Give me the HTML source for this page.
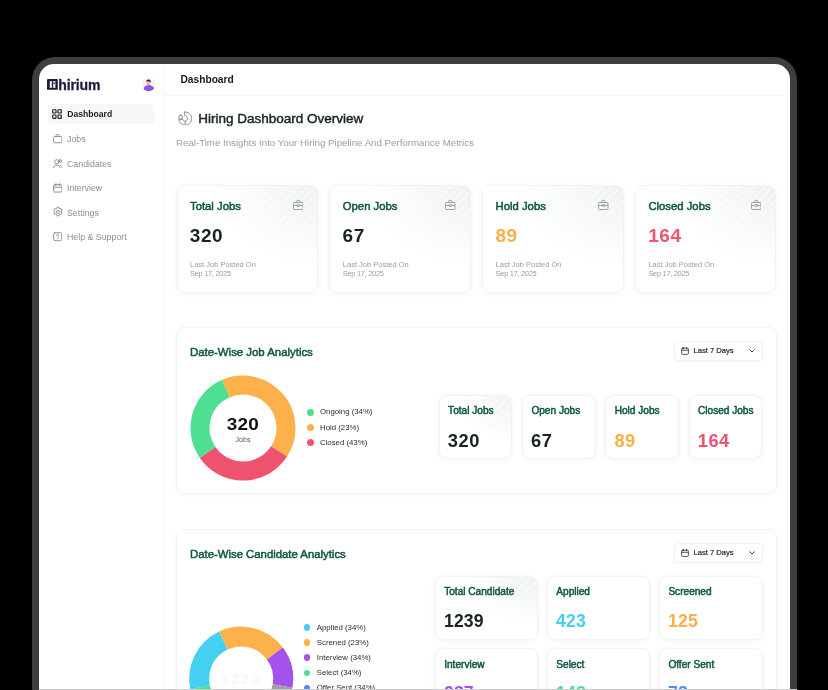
<!DOCTYPE html>
<html lang="en">
<head>
<meta charset="utf-8">
<title>Hirium Dashboard</title>
<style>
*{box-sizing:border-box;margin:0;padding:0}
html,body{width:828px;height:690px;overflow:hidden;background:#000}
body{font-family:"Liberation Sans",sans-serif;position:relative;color:#1b2a25}
.abs{position:absolute}
.frame{position:absolute;left:32px;top:57px;width:765px;height:700px;background:#3e3e3e;border-radius:23px}
.screen{position:absolute;left:39px;top:64px;width:751px;height:700px;background:#fff;border-radius:15px;overflow:hidden}
/* coordinates inside .screen are page coords minus (39,64) -> use wrapper shifting */
.page{position:absolute;left:-39px;top:-64px;width:828px;height:690px;will-change:transform}
.t{position:absolute;white-space:nowrap;line-height:1}
.med{-webkit-text-stroke:0.5px currentColor}
.green{color:#0f5745}
.card{position:absolute;background:#fff;border:1px solid #f1f3f2;border-radius:8px;box-shadow:0 1px 6px rgba(0,0,0,.045)}
.grad{background:repeating-linear-gradient(135deg,rgba(255,255,255,.32) 0 3px,rgba(255,255,255,0) 3px 6px),radial-gradient(ellipse 72% 78% at 100% 0%,#edf1f0 0%,#f4f7f6 38%,#ffffff 100%)}
.num{font-weight:700;letter-spacing:0.55px}
.grad2{background:repeating-linear-gradient(135deg,rgba(255,255,255,.32) 0 3px,rgba(255,255,255,0) 3px 6px),radial-gradient(ellipse 70% 75% at 100% 0%,#ecf0ef 0%,#f4f7f6 40%,#ffffff 100%)}
.navt{position:absolute;left:67px;font-size:8.8px;color:#8b8f8e;white-space:nowrap;line-height:1}
.ico{position:absolute}
.leg{position:absolute;font-size:7.8px;color:#2b2f2e;white-space:nowrap;line-height:1}
.dot{position:absolute;width:7px;height:7px;border-radius:50%}
.dd{position:absolute;border:1px solid #eff1f0;border-radius:4px;background:#fff;box-shadow:0 1px 2px rgba(0,0,0,.03)}
</style>
</head>
<body>
<div class="frame"></div>
<div class="screen"><div class="page">

<!-- sidebar -->
<div class="abs" style="left:163px;top:64px;width:1px;height:640px;background:#f4f5f5"></div>
<div class="abs" style="left:163px;top:94.5px;width:622px;height:1px;background:#f2f3f3"></div>

<!-- logo -->
<svg class="ico" style="left:47.4px;top:78.8px" width="10.8" height="10.8" viewBox="0 0 10.8 10.8">
  <rect x="0" y="0" width="10.8" height="10.8" rx="0.5" fill="#1f1b3d"/>
  <rect x="2.8" y="2.2" width="5.6" height="6.6" fill="#fff"/>
  <rect x="4.8" y="2.2" width="1.4" height="6.6" fill="#1f1b3d"/>
  <rect x="6.2" y="3.7" width="2.2" height="1.1" fill="#1f1b3d"/>
</svg>
<div class="t" style="left:58.2px;top:77.6px;font-size:14px;font-weight:700;color:#1f1b3d;letter-spacing:-0.1px;-webkit-text-stroke:0.3px #1f1b3d">hirium</div>

<!-- avatar -->
<svg class="ico" style="left:141.5px;top:78.1px" width="13.2" height="13.2" viewBox="0 0 26 26">
  <defs><clipPath id="avc"><circle cx="13" cy="13" r="13"/></clipPath></defs>
  <circle cx="13" cy="13" r="12.6" fill="#f5f2fc" stroke="#e9e6f1" stroke-width="0.8"/>
  <g clip-path="url(#avc)">
    <path d="M9.8 9 h5.6 v7 h-5.6 z" fill="#e9a98c"/>
    <ellipse cx="12.4" cy="9.2" rx="3.3" ry="4" fill="#efb497"/>
    <path d="M8.6 7.6 C8 3.8 11 2.6 13.6 3 C17 3.4 18 6.4 16.8 9.4 C15.6 7 12.6 6 10 6.8 Z" fill="#3a1c1c"/>
    <path d="M2.5 26 C2.5 17 7 14.4 13 14.4 C20 14.4 24.5 17 24.5 26 Z" fill="#8a52ea"/>
  </g>
</svg>

<!-- nav -->
<div class="abs" style="left:48px;top:104px;width:106px;height:20px;background:#f6f7f7;border-radius:4px"></div>
<svg class="ico" style="left:52px;top:109px" width="10" height="10" viewBox="0 0 10 10" fill="none" stroke="#1b1f1e" stroke-width="1.15">
  <rect x="0.7" y="0.7" width="3.3" height="3.3" rx="0.6"/><rect x="6" y="0.7" width="3.3" height="3.3" rx="0.6"/>
  <rect x="0.7" y="6" width="3.3" height="3.3" rx="0.6"/><rect x="6" y="6" width="3.3" height="3.3" rx="0.6"/>
</svg>
<div class="t" style="left:67.3px;top:110px;font-size:8.6px;font-weight:700;color:#1b1f1e">Dashboard</div>

<svg class="ico" style="left:52.6px;top:134.2px" width="9.4" height="9.4" viewBox="0 0 10.5 10.5" fill="none" stroke="#858988" stroke-width="1">
  <rect x="0.6" y="2.8" width="9.3" height="7" rx="1.2"/><path d="M3.5 2.8 V1.6 C3.5 1 3.9 0.6 4.5 0.6 H6 C6.6 0.6 7 1 7 1.6 V2.8"/>
</svg>
<div class="navt" style="top:135.3px">Jobs</div>

<svg class="ico" style="left:52.6px;top:158.8px" width="9.4" height="9.4" viewBox="0 0 10.5 10.5" fill="none" stroke="#858988" stroke-width="1" stroke-linecap="round">
  <circle cx="4.2" cy="3.1" r="2.3"/><path d="M0.6 9.8 C0.8 7.6 2.2 6.9 4.2 6.9 C6.2 6.9 7.6 7.6 7.8 9.8"/><rect x="7" y="1" width="2.6" height="2.6" rx="0.7"/><path d="M8.4 7 C9.3 7.4 9.8 8.2 9.9 9.4"/>
</svg>
<div class="navt" style="top:159.6px">Candidates</div>

<svg class="ico" style="left:52.6px;top:183.2px" width="9.6" height="9.8" viewBox="0 0 10.5 10.5" fill="none" stroke="#858988" stroke-width="1" stroke-linecap="round">
  <rect x="0.8" y="1.8" width="8.9" height="8" rx="1.2"/><path d="M0.8 4.6 H9.7 M3.2 0.6 V2.8 M7.3 0.6 V2.8"/>
</svg>
<div class="navt" style="top:183.5px">Interview</div>

<svg class="ico" style="left:51.5px;top:206.4px" width="11.8" height="11.8" viewBox="0 0 24 24" fill="none" stroke="#858988" stroke-width="1.9" stroke-linejoin="round">
  <path d="M10.3 2.5 h3.4 l0.6 2.7 l2 1.1 l2.6 -0.9 l1.7 3 l-2 1.8 v2.3 l2 1.8 l-1.7 3 l-2.6 -0.9 l-2 1.1 l-0.6 2.7 h-3.4 l-0.6 -2.7 l-2 -1.1 l-2.6 0.9 l-1.7 -3 l2 -1.8 v-2.3 l-2 -1.8 l1.7 -3 l2.6 0.9 l2 -1.1 z"/><circle cx="12" cy="12" r="3"/>
</svg>
<div class="navt" style="top:208.6px">Settings</div>

<svg class="ico" style="left:52.6px;top:232.2px" width="9.4" height="9.4" viewBox="0 0 10.5 10.5" fill="none" stroke="#858988" stroke-width="1" stroke-linecap="round">
  <rect x="0.8" y="0.8" width="8.9" height="8.9" rx="1.4"/><path d="M4 4 C4 3 4.6 2.7 5.3 2.7 C6 2.7 6.6 3.1 6.6 3.9 C6.6 4.8 5.3 4.9 5.3 6"/><path d="M5.3 7.5 V7.6"/>
</svg>
<div class="navt" style="top:233.3px">Help &amp; Support</div>

<!-- header -->
<div class="t" style="left:180.5px;top:74.5px;font-size:10.2px;font-weight:700;color:#161a19">Dashboard</div>

<!-- title -->
<svg class="ico" style="left:177.6px;top:110.6px" width="14.5" height="14.8" viewBox="0 0 15 15" fill="none" stroke="#858988" stroke-width="1" stroke-linecap="round" stroke-linejoin="round">
  <path d="M6.6 0.9 C10.8 0.4 14.2 3.6 14.2 7.6 C14.2 11.4 11.2 14.4 7.4 14.4 C4 14.4 1.2 12 0.7 8.8"/>
  <path d="M6.6 0.9 V4.2 C8.6 4.4 9.8 5.9 9.8 7.6 C9.8 9.4 8.6 10.4 7.4 10.5 V14.3"/>
  <path d="M7.4 10.5 C6 10.4 5 9.6 4.7 8.6"/>
  <rect x="0.9" y="4.2" width="3.8" height="4" rx="1.5"/>
  <path d="M0.9 8.8 C2 9 3.6 9 4.7 8.4"/>
</svg>
<div class="t" style="left:198.3px;top:111.5px;font-size:13.5px;color:#17241f;-webkit-text-stroke:0.45px #17241f">Hiring Dashboard Overview</div>
<div class="t" style="left:176px;top:138px;font-size:9.7px;color:#9a9e9d">Real-Time Insights Into Your Hiring Pipeline And Performance Metrics</div>

<!-- cards -->
<div class="card grad" style="left:176.50px;top:185px;width:141.5px;height:107.5px">
  <div class="t med green" style="left:12.5px;top:14.5px;font-size:11.3px">Total Jobs</div>
  <svg class="ico" style="left:115px;top:13.8px" width="10.6" height="10.2" viewBox="0 0 11 10.5" fill="none" stroke="#8a8f8d" stroke-width="0.85" stroke-linejoin="round"><rect x="0.6" y="2.6" width="9.8" height="7.2" rx="0.9"/><path d="M3.7 2.6 V1.3 C3.7 0.9 4 0.6 4.4 0.6 H6.6 C7 0.6 7.3 0.9 7.3 1.3 V2.6"/><path d="M0.6 5.6 H4.4 M6.6 5.6 H10.4"/><rect x="4.4" y="4.8" width="2.2" height="1.7" rx="0.3"/></svg>
  <div class="t num" style="left:12.3px;top:40.4px;font-size:19px;color:#17241f">320</div>
  <div class="t" style="left:12.5px;top:74.8px;font-size:7.5px;color:#9b9f9e">Last Job Posted On</div>
  <div class="t" style="left:12.5px;top:84.2px;font-size:7.5px;letter-spacing:-0.32px;color:#9b9f9e">Sep 17, 2025</div>
</div>
<div class="card grad" style="left:329.30px;top:185px;width:141.5px;height:107.5px">
  <div class="t med green" style="left:12.5px;top:14.5px;font-size:11.3px">Open Jobs</div>
  <svg class="ico" style="left:115px;top:13.8px" width="10.6" height="10.2" viewBox="0 0 11 10.5" fill="none" stroke="#8a8f8d" stroke-width="0.85" stroke-linejoin="round"><rect x="0.6" y="2.6" width="9.8" height="7.2" rx="0.9"/><path d="M3.7 2.6 V1.3 C3.7 0.9 4 0.6 4.4 0.6 H6.6 C7 0.6 7.3 0.9 7.3 1.3 V2.6"/><path d="M0.6 5.6 H4.4 M6.6 5.6 H10.4"/><rect x="4.4" y="4.8" width="2.2" height="1.7" rx="0.3"/></svg>
  <div class="t num" style="left:12.3px;top:40.4px;font-size:19px;color:#17241f">67</div>
  <div class="t" style="left:12.5px;top:74.8px;font-size:7.5px;color:#9b9f9e">Last Job Posted On</div>
  <div class="t" style="left:12.5px;top:84.2px;font-size:7.5px;letter-spacing:-0.32px;color:#9b9f9e">Sep 17, 2025</div>
</div>
<div class="card grad" style="left:482.10px;top:185px;width:141.5px;height:107.5px">
  <div class="t med green" style="left:12.5px;top:14.5px;font-size:11.3px">Hold Jobs</div>
  <svg class="ico" style="left:115px;top:13.8px" width="10.6" height="10.2" viewBox="0 0 11 10.5" fill="none" stroke="#8a8f8d" stroke-width="0.85" stroke-linejoin="round"><rect x="0.6" y="2.6" width="9.8" height="7.2" rx="0.9"/><path d="M3.7 2.6 V1.3 C3.7 0.9 4 0.6 4.4 0.6 H6.6 C7 0.6 7.3 0.9 7.3 1.3 V2.6"/><path d="M0.6 5.6 H4.4 M6.6 5.6 H10.4"/><rect x="4.4" y="4.8" width="2.2" height="1.7" rx="0.3"/></svg>
  <div class="t num" style="left:12.3px;top:40.4px;font-size:19px;color:#fbae4a">89</div>
  <div class="t" style="left:12.5px;top:74.8px;font-size:7.5px;color:#9b9f9e">Last Job Posted On</div>
  <div class="t" style="left:12.5px;top:84.2px;font-size:7.5px;letter-spacing:-0.32px;color:#9b9f9e">Sep 17, 2025</div>
</div>
<div class="card grad" style="left:634.90px;top:185px;width:141.5px;height:107.5px">
  <div class="t med green" style="left:12.5px;top:14.5px;font-size:11.3px">Closed Jobs</div>
  <svg class="ico" style="left:115px;top:13.8px" width="10.6" height="10.2" viewBox="0 0 11 10.5" fill="none" stroke="#8a8f8d" stroke-width="0.85" stroke-linejoin="round"><rect x="0.6" y="2.6" width="9.8" height="7.2" rx="0.9"/><path d="M3.7 2.6 V1.3 C3.7 0.9 4 0.6 4.4 0.6 H6.6 C7 0.6 7.3 0.9 7.3 1.3 V2.6"/><path d="M0.6 5.6 H4.4 M6.6 5.6 H10.4"/><rect x="4.4" y="4.8" width="2.2" height="1.7" rx="0.3"/></svg>
  <div class="t num" style="left:12.3px;top:40.4px;font-size:19px;color:#ee5370">164</div>
  <div class="t" style="left:12.5px;top:74.8px;font-size:7.5px;color:#9b9f9e">Last Job Posted On</div>
  <div class="t" style="left:12.5px;top:84.2px;font-size:7.5px;letter-spacing:-0.32px;color:#9b9f9e">Sep 17, 2025</div>
</div>
<!-- job analytics -->
<div class="card" style="left:176px;top:327px;width:601px;height:167px;box-shadow:0 1px 5px rgba(0,0,0,.03)"></div>
<div class="t med green" style="left:190px;top:346.6px;font-size:11.4px">Date-Wise Job Analytics</div>
<div class="dd" style="left:673.5px;top:341.3px;width:89.5px;height:19.5px"></div>
<svg class="ico" style="left:681.2px;top:346.90000000000003px" width="8" height="8" viewBox="0 0 8 8" fill="none" stroke="#2a2e2d" stroke-width="0.8" stroke-linecap="round"><rect x="0.6" y="1.2" width="6.8" height="6.2" rx="1"/><path d="M0.6 3.3 H7.4 M2.4 0.4 V1.9 M5.6 0.4 V1.9"/></svg>
<div class="t" style="left:693.5px;top:347.1px;font-size:7.6px;color:#222625;-webkit-text-stroke:0.2px #222625">Last 7 Days</div>
<svg class="ico" style="left:749.3px;top:349.3px" width="6" height="4" viewBox="0 0 6 4" fill="none" stroke="#2a2e2d" stroke-width="0.9" stroke-linecap="round" stroke-linejoin="round"><path d="M0.8 0.8 L3 3 L5.2 0.8"/></svg>
<svg class="ico" style="left:183px;top:367.5px" width="120" height="120" viewBox="183 367.5 120 120"><path d="M207.65 451.98 A43 43 0 0 1 225.85 388.07" stroke="#4ddf92" stroke-width="19" fill="none"/><path d="M225.85 388.07 A43 43 0 0 1 279.06 450.92" stroke="#fdb14b" stroke-width="19" fill="none"/><path d="M279.06 450.92 A43 43 0 0 1 207.65 451.98" stroke="#ef526e" stroke-width="19" fill="none"/></svg>
<div class="t" style="left:203px;width:80px;text-align:center;top:416.2px;font-size:16.2px;font-weight:700;letter-spacing:0.2px;transform:scaleX(1.17);color:#111">320</div>
<div class="t" style="left:203px;width:80px;text-align:center;top:436px;font-size:7px;color:#555">Jobs</div>
<div class="dot" style="left:306.7px;top:408.7px;background:#4ddf92"></div><div class="leg" style="left:320px;top:408.3px">Ongoing (34%)</div>
<div class="dot" style="left:306.7px;top:424.2px;background:#fdb14b"></div><div class="leg" style="left:320px;top:423.8px">Hold (23%)</div>
<div class="dot" style="left:306.7px;top:439.3px;background:#ef526e"></div><div class="leg" style="left:320px;top:438.90000000000003px">Closed (43%)</div>
<div class="card grad2" style="left:438.80px;top:395px;width:73.7px;height:64px">
  <div class="t med green" style="left:8.3px;top:10.3px;font-size:10.1px">Total Jobs</div>
  <div class="t num" style="left:8px;top:35.8px;font-size:18.3px;color:#17241f">320</div>
</div>
<div class="card" style="left:522.10px;top:395px;width:73.7px;height:64px">
  <div class="t med green" style="left:8.3px;top:10.3px;font-size:10.1px">Open Jobs</div>
  <div class="t num" style="left:8px;top:35.8px;font-size:18.3px;color:#17241f">67</div>
</div>
<div class="card" style="left:605.40px;top:395px;width:73.7px;height:64px">
  <div class="t med green" style="left:8.3px;top:10.3px;font-size:10.1px">Hold Jobs</div>
  <div class="t num" style="left:8px;top:35.8px;font-size:18.3px;color:#fbae4a">89</div>
</div>
<div class="card" style="left:688.70px;top:395px;width:73.7px;height:64px">
  <div class="t med green" style="left:8.3px;top:10.3px;font-size:10.1px">Closed Jobs</div>
  <div class="t num" style="left:8px;top:35.8px;font-size:18.3px;color:#ee5370">164</div>
</div>
<!-- candidate analytics -->
<div class="card" style="left:176px;top:528.7px;width:601px;height:220px;box-shadow:0 1px 5px rgba(0,0,0,.03)"></div>
<div class="t med green" style="left:190px;top:548.5px;font-size:11.35px">Date-Wise Candidate Analytics</div>
<div class="dd" style="left:673.5px;top:543px;width:89.5px;height:19.5px"></div>
<svg class="ico" style="left:681.2px;top:548.6px" width="8" height="8" viewBox="0 0 8 8" fill="none" stroke="#2a2e2d" stroke-width="0.8" stroke-linecap="round"><rect x="0.6" y="1.2" width="6.8" height="6.2" rx="1"/><path d="M0.6 3.3 H7.4 M2.4 0.4 V1.9 M5.6 0.4 V1.9"/></svg>
<div class="t" style="left:693.5px;top:548.8px;font-size:7.6px;color:#222625;-webkit-text-stroke:0.2px #222625">Last 7 Days</div>
<svg class="ico" style="left:749.3px;top:551px" width="6" height="4" viewBox="0 0 6 4" fill="none" stroke="#2a2e2d" stroke-width="0.9" stroke-linecap="round" stroke-linejoin="round"><path d="M0.8 0.8 L3 3 L5.2 0.8"/></svg>
<svg class="ico" style="left:181px;top:618px" width="122" height="122" viewBox="181 618 122 122"><path d="M200.12 687.33 A42 42 0 0 1 223.45 640.54" stroke="#45d0f2" stroke-width="20" fill="none"/><path d="M223.45 640.54 A42 42 0 0 1 274.87 653.50" stroke="#fdb14b" stroke-width="20" fill="none"/><path d="M274.87 653.50 A42 42 0 0 1 282.56 685.89" stroke="#a352ec" stroke-width="20" fill="none"/><path d="M282.56 685.89 A42 42 0 0 1 262.20 714.97" stroke="#9aa1a0" stroke-width="20" fill="none"/><path d="M262.20 714.97 A42 42 0 0 1 226.84 718.07" stroke="#4b8df0" stroke-width="20" fill="none"/><path d="M226.84 718.07 A42 42 0 0 1 200.12 687.33" stroke="#4ddf92" stroke-width="20" fill="none"/></svg>
<div class="t" style="left:201px;width:80px;text-align:center;top:670.5px;font-size:15px;font-weight:700;letter-spacing:2px;color:#f6f7f7">3220</div>
<div class="dot" style="left:303.8px;top:624.05px;width:6.5px;height:6.5px;background:#45d0f2"></div><div class="leg" style="left:316.8px;top:623.6999999999999px">Applied (34%)</div>
<div class="dot" style="left:303.8px;top:639.45px;width:6.5px;height:6.5px;background:#fdb14b"></div><div class="leg" style="left:316.8px;top:639.1px">Screned (23%)</div>
<div class="dot" style="left:303.8px;top:654.45px;width:6.5px;height:6.5px;background:#a352ec"></div><div class="leg" style="left:316.8px;top:654.1px">Interview (34%)</div>
<div class="dot" style="left:303.8px;top:669.75px;width:6.5px;height:6.5px;background:#4ddf92"></div><div class="leg" style="left:316.8px;top:669.4px">Select (34%)</div>
<div class="dot" style="left:303.8px;top:684.75px;width:6.5px;height:6.5px;background:#4b8df0"></div><div class="leg" style="left:316.8px;top:684.4px">Offer Sent (34%)</div>
<div class="card grad2" style="left:434.60px;top:575.50px;width:103.8px;height:64px">
  <div class="t med green" style="left:8.6px;top:10.5px;font-size:10.1px">Total Candidate</div>
  <div class="t num" style="left:8.3px;top:36.3px;font-size:17.6px;letter-spacing:0.2px;color:#17241f">1239</div>
</div>
<div class="card" style="left:546.70px;top:575.50px;width:103.8px;height:64px">
  <div class="t med green" style="left:8.6px;top:10.5px;font-size:10.1px">Applied</div>
  <div class="t num" style="left:8.3px;top:36.3px;font-size:17.6px;letter-spacing:0.2px;color:#45d0f2">423</div>
</div>
<div class="card" style="left:658.80px;top:575.50px;width:103.8px;height:64px">
  <div class="t med green" style="left:8.6px;top:10.5px;font-size:10.1px">Screened</div>
  <div class="t num" style="left:8.3px;top:36.3px;font-size:17.6px;letter-spacing:0.2px;color:#fbae4a">125</div>
</div>
<div class="card" style="left:434.60px;top:648.20px;width:103.8px;height:64px">
  <div class="t med green" style="left:8.6px;top:10.5px;font-size:10.1px">Interview</div>
  <div class="t num" style="left:8.3px;top:36.3px;font-size:17.6px;letter-spacing:0.2px;color:#a352ec">287</div>
</div>
<div class="card" style="left:546.70px;top:648.20px;width:103.8px;height:64px">
  <div class="t med green" style="left:8.6px;top:10.5px;font-size:10.1px">Select</div>
  <div class="t num" style="left:8.3px;top:36.3px;font-size:17.6px;letter-spacing:0.2px;color:#4ddf92">148</div>
</div>
<div class="card" style="left:658.80px;top:648.20px;width:103.8px;height:64px">
  <div class="t med green" style="left:8.6px;top:10.5px;font-size:10.1px">Offer Sent</div>
  <div class="t num" style="left:8.3px;top:36.3px;font-size:17.6px;letter-spacing:0.2px;color:#4b8df0">78</div>
</div>

</div></div>
<div class="abs" style="left:39px;top:688.5px;width:758px;height:1.5px;background:#cdcdcd"></div>
</body>
</html>
